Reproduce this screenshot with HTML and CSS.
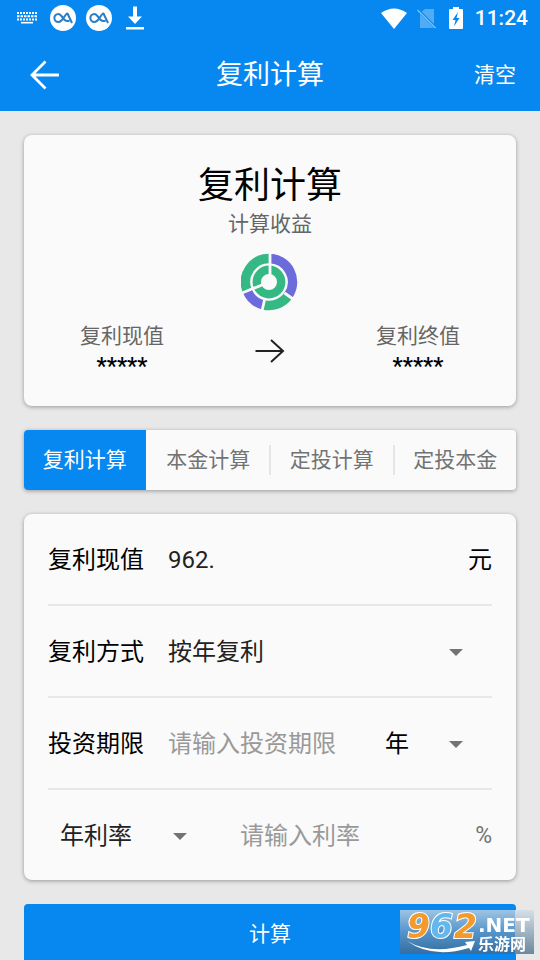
FILE: index.html
```html
<!DOCTYPE html>
<html lang="zh-CN">
<head>
<meta charset="utf-8">
<meta name="viewport" content="width=device-width, initial-scale=1">
<title>复利计算</title>
<link rel="stylesheet" href="styles.css">
</head>
<body>
<header class="top">
  <div class="status">
    <div class="status-group status-left">
      <svg width="24" height="12" viewBox="0 0 24 12" fill="none" stroke="#fff" stroke-width="2">
        <path d="M1 1H21" stroke-dasharray="2 1"/><path d="M1 4.2H21" stroke-dasharray="2.5 1"/><path d="M1 7.4H21" stroke-dasharray="2 1"/><path d="M5 10.7H17" stroke-width="1.6"/>
      </svg>
      <svg width="26" height="26" viewBox="0 0 26 26"><circle cx="13" cy="13" r="13" fill="#fff"/><path d="M22 18L17.5 8.500C14.500 9 13 17 8.500 17C3 17 3 9 8.500 9C12 9 13 16 17 16H19.500" fill="none" stroke="#2b7fc8" stroke-width="2" stroke-linejoin="round"/></svg>
      <svg width="26" height="26" viewBox="0 0 26 26"><circle cx="13" cy="13" r="13" fill="#fff"/><path d="M22 18L17.5 8.500C14.500 9 13 17 8.500 17C3 17 3 9 8.500 9C12 9 13 16 17 16H19.500" fill="none" stroke="#2b7fc8" stroke-width="2" stroke-linejoin="round"/></svg>
      <svg width="18" height="24" viewBox="0 0 18 24" fill="#fff"><path d="M7 0.500h4v10h5L9 18 2 10.500h5z"/><path d="M0 21h18v2.500H0z"/></svg>
    </div>
    <div class="status-group status-right">
      <svg width="26" height="21" viewBox="0 0 26 21" fill="#fff"><path d="M0 5Q13-4 26 5L13 21z"/></svg>
      <svg width="20" height="21" viewBox="0 0 20 21"><path d="M3 5L8 1H17V20H3z" fill="#fff" opacity=".3"/><path d="M1 2L19 20" stroke="#0688f0" stroke-width="3"/><path d="M0.500 2L18.500 20" stroke="#fff" stroke-opacity=".5" stroke-width="1.300"/></svg>
      <svg width="14" height="22" viewBox="0 0 14 22"><path d="M4 0h6v2h3q1 0 1 1v18q0 1-1 1H1q-1 0-1-1V3q0-1 1-1h3z" fill="#fff"/><path d="M9 5L3.500 13H6.500L5 19.500L10.500 11H7.500z" fill="#0688f0"/></svg>
      <span class="clock">11:24</span>
    </div>
  </div>
  <div class="appbar">
    <button class="back" type="button" aria-label="返回">
      <svg width="30" height="30" viewBox="0 0 30 30" fill="none" stroke="#fff" stroke-width="2.800"><path d="M15.500 1.500L2 15L15.500 28.500M2 15H29"/></svg>
    </button>
    <h1 class="appbar-title">复利计算</h1>
    <button class="clear" type="button">清空</button>
  </div>
</header>

<main class="content">
  <section class="card summary">
    <h2 class="summary-title">复利计算</h2>
    <p class="caption">计算收益</p>
    <svg class="donut" width="58" height="58" viewBox="-28 -29 58 58" fill="none">
      <g stroke-width="9.500">
        <path d="M0-23.500A23.500 23.500 0 0 1 19.250 13.480" stroke="#6c6bdc"/>
        <path d="M19.250 13.480A23.500 23.500 0 0 1-5.700 22.800" stroke="#34b985"/>
        <path d="M-5.700 22.800A23.500 23.500 0 0 1-21.800 8.800" stroke="#6c6bdc"/>
        <path d="M-21.800 8.800A23.500 23.500 0 0 1 0-23.500" stroke="#34b985"/>
      </g>
      <circle r="12.200" stroke="#34b985" stroke-width="8.400"/>
      <path d="M1-29V-5M-4 1.700L-27 11M15.500 11L24 17M-4.500 18L-7 29" stroke="#fafafa" stroke-width="2.800"/>
    </svg>
    <div class="values">
      <div class="value"><p class="caption">复利现值</p><p class="stars">*****</p></div>
      <svg class="arrow" width="30" height="26" viewBox="0 0 30 26" fill="none" stroke="#222" stroke-width="2"><path d="M0.500 12H28M16 1L28 12L16 23"/></svg>
      <div class="value"><p class="caption">复利终值</p><p class="stars">*****</p></div>
    </div>
  </section>

  <nav class="card tabs">
    <button class="tab active" type="button">复利计算</button>
    <button class="tab" type="button">本金计算</button>
    <button class="tab" type="button">定投计算</button>
    <button class="tab" type="button">定投本金</button>
  </nav>

  <form class="form" id="calc">
    <div class="card fields">
      <div class="row">
        <label class="name" for="present">复利现值</label>
        <input class="entry" id="present" type="text" inputmode="decimal" value="962.">
        <span class="unit">元</span>
      </div>
      <div class="row">
        <label class="name" for="mode">复利方式</label>
        <span class="picker picker-wide"><select id="mode"><option>按年复利</option></select></span>
      </div>
      <div class="row">
        <label class="name" for="term">投资期限</label>
        <input class="entry" id="term" type="text" inputmode="decimal" placeholder="请输入投资期限">
        <span class="picker picker-unit"><select aria-label="期限单位"><option>年</option></select></span>
      </div>
      <div class="row">
        <span class="picker picker-rate"><select aria-label="利率类型"><option>年利率</option></select></span>
        <input class="entry" type="text" inputmode="decimal" aria-label="利率" placeholder="请输入利率">
        <span class="unit percent">%</span>
      </div>
    </div>
    <button class="submit" type="button">计算</button>
  </form>
</main>

<svg class="badge" width="134" height="44" viewBox="0 0 134 44">
  <defs>
    <linearGradient id="sky" x1="0" y1="0" x2="0" y2="1"><stop offset="0" stop-color="#9fc4e2"/><stop offset=".5" stop-color="#5494cb"/><stop offset="1" stop-color="#356d9f"/></linearGradient>
    <linearGradient id="edge" x1="0" y1="0" x2="0" y2="1"><stop offset="0" stop-color="#d5dfe7"/><stop offset="1" stop-color="#6c889e"/></linearGradient>
  </defs>
  <path d="M0 0H115V44H0z" fill="url(#sky)"/><path d="M115 0H134V44H115z" fill="url(#edge)"/>
  <g class="badge-digits"><text x="7" y="28" fill="#f49a2c">9</text><text x="30" y="28" fill="#62b8ec">6</text><text x="54" y="28" fill="#f49a2c">2</text></g>
  <path d="M7 31Q31 45 67 35L65 32L75 31L71 41L69 38Q32 49 7 31z" fill="#fff"/>
  <text class="badge-net" x="78" y="22">.NET</text>
  <text class="badge-name" x="78" y="40">乐游网</text>
</svg>
</body>
</html>
```
FILE: styles.css
```css
* {
  box-sizing: border-box;
}

html {
  scrollbar-width: none;
}

body {
  margin: 0;
  background: #e8e8e8;
  color: #000;
  font-family: Roboto, "Noto Sans CJK SC", sans-serif;
  font-size: 24px;
  line-height: 32px;
}

h1, h2, p {
  margin: 0;
  font-weight: 400;
}

svg {
  display: block;
  flex: none;
}

button, input, select {
  margin: 0;
  padding: 0;
  border: 0;
  border-radius: 0;
  background: none;
  color: inherit;
  font: inherit;
}

.top {
  background: #0688f0;
  color: #fff;
}

.status {
  display: flex;
  align-items: center;
  justify-content: space-between;
  height: 36px;
  padding: 0 12px 0 16px;
}

.status-group {
  display: flex;
  align-items: center;
}

.status-left {
  gap: 10px;
}

.status-left svg:last-child {
  margin-left: 4px;
}

.status-right {
  gap: 10px;
}

.clock {
  margin-left: 2px;
  font-size: 21px;
  font-weight: 500;
}

.status-right svg:nth-child(2) {
  margin-right: 2px;
}

.appbar {
  display: grid;
  grid-template-columns: 1fr auto 1fr;
  align-items: center;
  height: 75px;
  padding: 2px 24px 0;
}

.back {
  justify-self: start;
  margin-left: 6px;
}

.appbar-title {
  font-size: 27px;
  line-height: 36px;
}

.clear {
  justify-self: end;
  font-size: 21px;
}

.content {
  display: flex;
  flex-direction: column;
  gap: 24px;
  padding: 24px 24px 0;
}

.card {
  border-radius: 8px;
  background: #fafafa;
  box-shadow: 0 1px 4px rgba(0, 0, 0, 0.35);
}

.summary {
  display: flex;
  flex-direction: column;
  align-items: center;
  padding: 28px 0 23px;
}

.summary-title {
  font-size: 36px;
  line-height: 46px;
}

.caption {
  color: #666;
  font-size: 21px;
  line-height: 30px;
}

.donut {
  margin: 14px 0 10px;
}

.values {
  display: flex;
  align-items: center;
  align-self: stretch;
  justify-content: center;
}

.value {
  flex: 0 1 196px;
  text-align: center;
}

.stars {
  font-size: 23px;
  font-weight: 500;
}

.arrow {
  margin: 0 35px;
}

.tabs {
  display: flex;
  gap: 2px;
  border-radius: 4px;
}

.tab {
  position: relative;
  flex: 1;
  height: 60px;
  color: #737373;
  font-size: 21px;
}

.tab.active {
  border-radius: 4px 0 0 4px;
  background: #0688f0;
  color: #fff;
}

.tab:not(.active):not(:last-child)::after {
  content: "";
  position: absolute;
  top: 15px;
  right: -2px;
  width: 2px;
  height: 30px;
  background: #e6e6e6;
}

.form {
  display: flex;
  flex-direction: column;
  gap: 24px;
}

.fields {
  padding: 0 24px;
}

.row {
  display: flex;
  align-items: center;
  min-height: 90px;
  padding-top: 2px;
}

.row + .row {
  min-height: 92px;
  border-top: 2px solid #e8e8e8;
}

.name {
  flex: none;
  margin-right: 24px;
}

.entry {
  flex: 1;
  min-width: 0;
  height: 48px;
  color: #222;
  outline: 0;
}

.entry::placeholder {
  color: #999;
  opacity: 1;
}

.percent {
  color: #737373;
  font-size: 23px;
}

.picker {
  display: grid;
  align-items: center;
  color: #222;
}

.picker select {
  grid-area: 1 / 1;
  width: 100%;
  height: 48px;
  appearance: none;
}

.picker::after {
  content: "";
  grid-area: 1 / 1;
  justify-self: end;
  border: 7px solid transparent;
  border-top-color: #737373;
  border-bottom: 0;
  pointer-events: none;
}

.picker-wide {
  flex: 1;
  margin-right: 29px;
}

.picker-unit {
  width: 78px;
  margin-right: 29px;
  color: #000;
}

.picker-rate {
  width: 127px;
  margin: 0 53px 0 12px;
}

.submit {
  height: 60px;
  border-radius: 4px;
  background: #0688f0;
  color: #fff;
  font-size: 21px;
}

.badge {
  position: fixed;
  right: 6px;
  bottom: 6px;
  overflow: visible;
}

.badge-digits {
  font: italic 700 33px "DejaVu Sans", sans-serif;
  paint-order: stroke;
  stroke: #fff;
  stroke-width: 2px;
}

.badge-net {
  fill: #fff;
  font: 700 20px "DejaVu Sans", sans-serif;
}

.badge-name {
  fill: #fff;
  font: 700 16px "Noto Sans CJK SC", sans-serif;
}
```
